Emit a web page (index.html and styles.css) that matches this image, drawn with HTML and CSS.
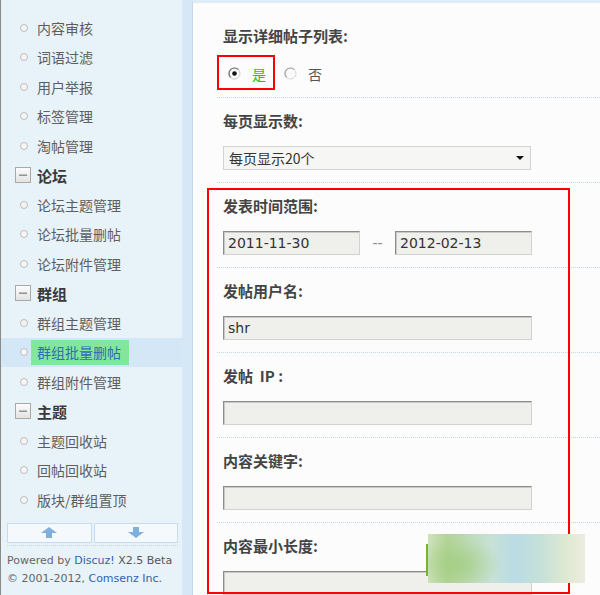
FILE: index.html
```html
<!DOCTYPE html>
<html lang="zh-CN">
<head>
<meta charset="utf-8">
<title>群组批量删帖</title>
<link rel="stylesheet" href="styles.css">
</head>
<body>
<aside class="sidebar">
  <ul class="nav">
    <li class="item"><span class="dot"></span>内容审核</li>
    <li class="item"><span class="dot"></span>词语过滤</li>
    <li class="item"><span class="dot"></span>用户举报</li>
    <li class="item"><span class="dot"></span>标签管理</li>
    <li class="item"><span class="dot"></span>淘帖管理</li>
    <li class="head"><svg class="box" width="16" height="16" viewBox="0 0 16 16"><defs><linearGradient id="bg" x1="0" y1="0" x2="0" y2="1"><stop offset="0" stop-color="#fdfdfd"/><stop offset="1" stop-color="#e2e2e2"/></linearGradient></defs><rect x="0.5" y="0.5" width="15" height="15" fill="url(#bg)" stroke="#a9a9a9"/><rect x="4" y="7.5" width="8" height="1.4" fill="#8a8a8a"/></svg>论坛</li>
    <li class="item"><span class="dot"></span>论坛主题管理</li>
    <li class="item"><span class="dot"></span>论坛批量删帖</li>
    <li class="item"><span class="dot"></span>论坛附件管理</li>
    <li class="head"><svg class="box" width="16" height="16" viewBox="0 0 16 16"><rect x="0.5" y="0.5" width="15" height="15" fill="url(#bg)" stroke="#a9a9a9"/><rect x="4" y="7.5" width="8" height="1.4" fill="#8a8a8a"/></svg>群组</li>
    <li class="item"><span class="dot"></span>群组主题管理</li>
    <li class="item active"><span class="dot"></span><span class="hl">群组批量删帖</span></li>
    <li class="item"><span class="dot"></span>群组附件管理</li>
    <li class="head"><svg class="box" width="16" height="16" viewBox="0 0 16 16"><rect x="0.5" y="0.5" width="15" height="15" fill="url(#bg)" stroke="#a9a9a9"/><rect x="4" y="7.5" width="8" height="1.4" fill="#8a8a8a"/></svg>主题</li>
    <li class="item"><span class="dot"></span>主题回收站</li>
    <li class="item"><span class="dot"></span>回帖回收站</li>
    <li class="item"><span class="dot"></span>版块/群组置顶</li>
  </ul>
  <div class="scroll">
    <button class="sbtn" type="button" aria-label="上"><svg width="16" height="11" viewBox="0 0 16 11"><polygon points="8,0 16,6 11,6 11,11 5,11 5,6 0,6" fill="#7fb0dc"/></svg></button>
    <button class="sbtn" type="button" aria-label="下"><svg width="16" height="11" viewBox="0 0 16 11"><polygon points="5,0 11,0 11,5 16,5 8,11 0,5 5,5" fill="#7fb0dc"/></svg></button>
  </div>
  <div class="footer">
    <div>Powered by <span class="link">Discuz!</span> <span class="ver">X2.5 Beta</span></div>
    <div>© 2001-2012, <span class="link">Comsenz Inc.</span></div>
  </div>
</aside>

<main class="content">
  <section class="group first">
    <div class="label">显示详细帖子列表:</div>
    <div class="radios">
      <span class="radio"><svg width="13" height="13" viewBox="0 0 13 13"><circle cx="6.5" cy="6.5" r="5.5" fill="#fafafa" stroke="#c9c9c9"/><path d="M2.6 10.4 A5.5 5.5 0 0 1 10.4 2.6" fill="none" stroke="#6f6f6f" stroke-width="1.2"/><circle cx="6.5" cy="6.5" r="2.3" fill="#111"/></svg></span>
      <span class="opt yes">是</span>
      <span class="radio"><svg width="13" height="13" viewBox="0 0 13 13"><circle cx="6.5" cy="6.5" r="5.5" fill="#fafafa" stroke="#d6d6d6"/><path d="M2.6 10.4 A5.5 5.5 0 0 1 10.4 2.6" fill="none" stroke="#a3a3a3" stroke-width="1.2"/></svg></span>
      <span class="opt">否</span>
    </div>
  </section>

  <section class="group">
    <div class="label">每页显示数:</div>
    <div class="field">
      <div class="select"><span>每页显示20个</span><span class="caret"></span></div>
    </div>
  </section>

  <section class="group">
    <div class="label">发表时间范围:</div>
    <div class="field">
      <div class="input short">2011-11-30</div>
      <span class="dash">--</span>
      <div class="input short">2012-02-13</div>
    </div>
  </section>

  <section class="group">
    <div class="label">发帖用户名:</div>
    <div class="field"><div class="input">shr</div></div>
  </section>

  <section class="group">
    <div class="label">发帖&nbsp; IP :</div>
    <div class="field"><div class="input"></div></div>
  </section>

  <section class="group">
    <div class="label">内容关键字:</div>
    <div class="field"><div class="input"></div></div>
  </section>

  <section class="group">
    <div class="label">内容最小长度:</div>
    <div class="field"><div class="input"></div></div>
  </section>
</main>

<div class="mark mark-radio"></div>
<div class="mark mark-form"></div>
<div class="blur"><span class="bar"></span></div>
</body>
</html>
```
FILE: styles.css
```css
* { box-sizing: border-box; }
html, body { margin: 0; padding: 0; }
body {
  position: relative;
  display: flex;
  width: 600px;
  height: 595px;
  overflow: hidden;
  background: #fbfcfb;
  font-family: "Noto Sans CJK SC", "Noto Sans", sans-serif;
}

/* sidebar */
.sidebar {
  flex: none;
  width: 192px;
  height: 595px;
  background: #e8f2f9;
  border-left: 1px solid #8a8a8a;
  border-right: 10px solid #d6e7f5;
  display: flex;
  flex-direction: column;
}
.nav {
  list-style: none;
  margin: 0;
  padding: 13px 0 0;
}
.item, .head {
  height: 29.5px;
  display: flex;
  align-items: center;
  font-size: 14px;
  color: #5e5e5e;
  white-space: nowrap;
}
.dot {
  width: 8px;
  height: 8px;
  margin: 0 9px 0 19px;
  border-radius: 50%;
  border: 1px solid #bdbdbd;
  background: #f5f5f5;
}
.head {
  font-size: 15px;
  font-weight: bold;
  color: #3a3a3a;
}
.box { margin: 0 6px 0 14px; flex: none; }
.item.active { background: #d4e7f7; }
.active .dot { margin-right: 3px; }
.hl {
  background: #82e69c;
  color: #2f6db5;
  line-height: 25px;
  padding: 0 8px 0 6px;
}
.scroll {
  display: flex;
  gap: 2px;
  padding: 8px 0 2px;
  margin: 0 4px 6px 6px;
  border-bottom: 1px dotted #c2d6e6;
}
.sbtn {
  width: 85px;
  height: 20px;
  padding: 0;
  border: 1px solid #c6dcee;
  background: #f5f9fc;
  display: flex;
  align-items: center;
  justify-content: center;
}
.footer {
  padding-left: 6px;
  font-family: "DejaVu Sans", sans-serif;
  font-size: 11px;
  line-height: 18px;
  color: #666;
  white-space: nowrap;
}
.link { color: #2f63b0; }
.ver { color: #555; }

/* content */
.content {
  flex: 1;
  border-left: 1px solid #c4d9ec;
  border-top: 3px solid #deecf7;
  padding-left: 24px;
}
.group {
  border-bottom: 1px dotted #c7d6e4;
  padding-left: 6px;
}
.group.first { padding-top: 10px; }
.label {
  height: 45px;
  display: flex;
  align-items: center;
  font-size: 15px;
  font-weight: bold;
  color: #444;
}
.radios {
  height: 39px;
  padding-bottom: 8px;
  display: flex;
  align-items: center;
  font-size: 14px;
  color: #555;
}
.radio { display: flex; margin-left: 5px; margin-right: 11px; }
.opt { margin-right: 13px; }
.yes { color: #12c812; }

.field {
  display: flex;
  align-items: center;
  padding: 3px 0 12px;
}
.select {
  width: 308px;
  height: 24px;
  border: 1px solid #d3d3d3;
  background: #f6f6f4;
  display: flex;
  align-items: center;
  justify-content: space-between;
  padding: 0 6px 0 5px;
  font-size: 14px;
  color: #333;
}
.caret {
  width: 0;
  height: 0;
  border-left: 4px solid transparent;
  border-right: 4px solid transparent;
  border-top: 4px solid #111;
}
.input {
  width: 309px;
  height: 24px;
  border: 1px solid;
  border-color: #8c8c8c #d2d2d2 #d2d2d2 #8c8c8c;
  box-shadow: inset 1px 1px 0 #c9c9c9;
  background: #efefec;
  padding-left: 4px;
  font-family: "DejaVu Sans", sans-serif;
  font-size: 14px;
  line-height: 22px;
  color: #333;
}
.input.short { width: 137px; }
.dash {
  width: 35px;
  text-align: center;
  font-family: "DejaVu Sans", sans-serif;
  font-size: 14px;
  color: #888;
}

/* annotations over the screenshot */
.mark {
  position: absolute;
  border: 2px solid #ff0000;
}
.mark-radio { left: 217px; top: 55px; width: 58px; height: 35px; }
.mark-form { left: 207px; top: 188px; width: 363px; height: 406px; }
.blur {
  position: absolute;
  left: 428px;
  top: 534px;
  width: 157px;
  height: 49px;
  background:
    radial-gradient(ellipse 45px 26px at 28px 30px, rgba(160,204,124,0.75), rgba(160,204,124,0) 100%),
    linear-gradient(to right, #cfe3be 0%, #b2d497 12%, #c7e1d6 40%, #badce5 55%, #c6e0d9 72%, #dfe9d2 88%, #ececdf 100%);
}
.bar {
  position: absolute;
  left: -2px;
  top: 10px;
  width: 2px;
  height: 32px;
  background: #79b431;
}
```
